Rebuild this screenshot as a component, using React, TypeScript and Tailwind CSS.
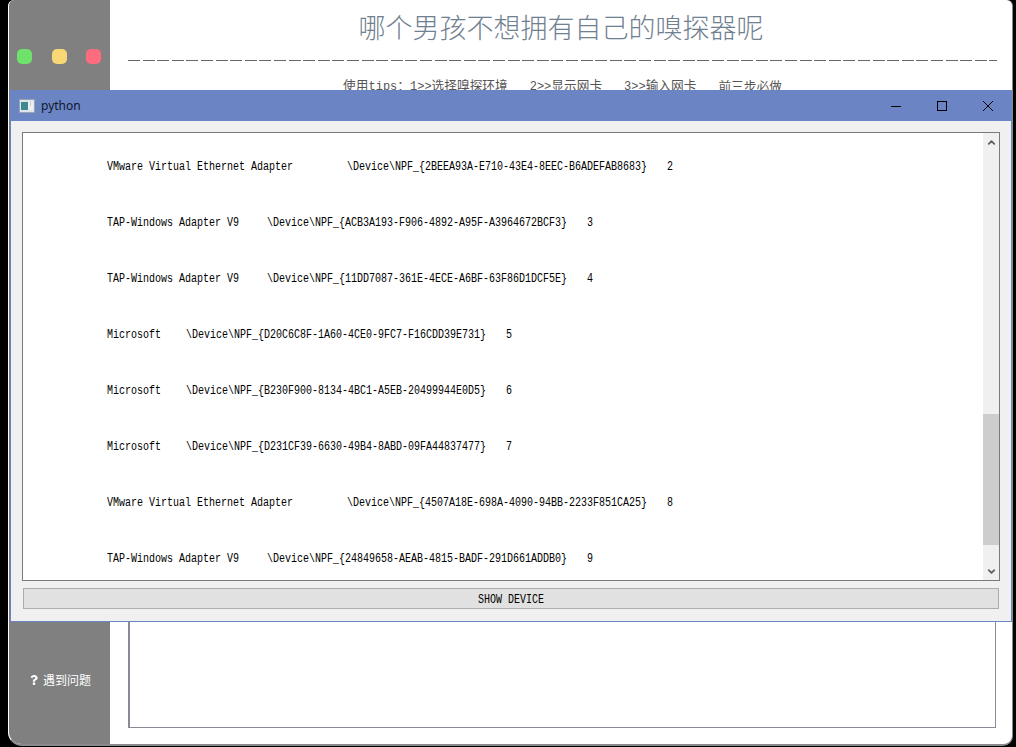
import { ChevronDown, ChevronUp } from "lucide-react"
import { FaQuestion } from "react-icons/fa"

const devices = [
  { name: "VMware Virtual Ethernet Adapter", gap: "ml-[54px]", path: "\\Device\\NPF_{2BEEA93A-E710-43E4-8EEC-B6ADEFAB8683}", num: 2 },
  { name: "TAP-Windows Adapter V9", gap: "ml-[28px]", path: "\\Device\\NPF_{ACB3A193-F906-4892-A95F-A3964672BCF3}", num: 3 },
  { name: "TAP-Windows Adapter V9", gap: "ml-[28px]", path: "\\Device\\NPF_{11DD7087-361E-4ECE-A6BF-63F86D1DCF5E}", num: 4 },
  { name: "Microsoft", gap: "ml-[25px]", path: "\\Device\\NPF_{D20C6C8F-1A60-4CE0-9FC7-F16CDD39E731}", num: 5 },
  { name: "Microsoft", gap: "ml-[25px]", path: "\\Device\\NPF_{B230F900-8134-4BC1-A5EB-20499944E0D5}", num: 6 },
  { name: "Microsoft", gap: "ml-[25px]", path: "\\Device\\NPF_{D231CF39-6630-49B4-8ABD-09FA44837477}", num: 7 },
  { name: "VMware Virtual Ethernet Adapter", gap: "ml-[54px]", path: "\\Device\\NPF_{4507A18E-698A-4090-94BB-2233F851CA25}", num: 8 },
  { name: "TAP-Windows Adapter V9", gap: "ml-[28px]", path: "\\Device\\NPF_{24849658-AEAB-4815-BADF-291D661ADDB0}", num: 9 },
]

function Mono({ children }: { children: string }) {
  return <span className="font-['Liberation_Mono',monospace] text-[12px]">{children}</span>
}

function PythonWindow() {
  return (
    <div className="absolute left-[10px] top-[90px] flex h-[532px] w-[1002px] flex-col border border-t-0 border-[#6b84c4] bg-[#f0f0f0]">
      <div className="flex h-[31px] shrink-0 items-center bg-[#6b84c4] pl-[8px] -mx-px">
        <svg width="16" height="14" viewBox="0 0 16 14" className="ml-px">
          <rect x="0.5" y="0.5" width="15" height="13" fill="#dfe5ea" stroke="#9aa3b4" />
          <rect x="2" y="3" width="7" height="8" fill="#3f8a90" />
          <rect x="9" y="3" width="5" height="8" fill="#eef1f2" />
          <rect x="11" y="3" width="1" height="4" fill="#c4ccd2" />
        </svg>
        <span className="ml-[6px] font-['Noto_Sans','Liberation_Sans',sans-serif] text-[12px] text-[#10182c]">python</span>
        <div className="ml-auto flex items-center">
          <svg width="46" height="12" viewBox="0 0 46 12">
            <path d="M18 6.5h10" stroke="#000" fill="none" />
          </svg>
          <svg width="46" height="12" viewBox="0 0 46 12">
            <rect x="18.5" y="1.5" width="9" height="9" stroke="#000" fill="none" />
          </svg>
          <svg width="46" height="12" viewBox="0 0 46 12" className="mr-[1px]">
            <path d="M18 1l10 10M28 1L18 11" stroke="#000" fill="none" />
          </svg>
        </div>
      </div>
      <div className="flex flex-1 flex-col px-[11px] pb-[12px] pt-[11px]">
        <div className="flex h-[449px] border border-[#7a7a7a] bg-white">
          <div className="flex-1 overflow-hidden pl-[84px] pt-[5px] font-['Liberation_Mono',monospace] text-[10px] text-black">
            {devices.map((d) => (
              <div key={d.path} className="flex h-[56px] items-center">
                <div className="flex scale-y-[1.25] whitespace-pre">
                  <span>{d.name}</span>
                  <span className={d.gap}>{d.path}</span>
                  <span className="ml-[20px]">{d.num}</span>
                </div>
              </div>
            ))}
          </div>
          <div className="flex w-[16px] shrink-0 flex-col bg-[#f0f0f0]">
            <div className="flex h-[17px] items-center justify-center pt-[1px]">
              <ChevronUp size={11} strokeWidth={4} color="#606060" />
            </div>
            <div className="flex-1 pt-[264px]">
              <div className="h-[131px] bg-[#cdcdcd]" />
            </div>
            <div className="flex h-[17px] items-center justify-center">
              <ChevronDown size={11} strokeWidth={4} color="#606060" />
            </div>
          </div>
        </div>
        <div className="ml-px mr-px mt-[7px] flex h-[21px] items-center justify-center border border-[#adadad] bg-[#e1e1e1] pt-[1px] font-['Liberation_Mono',monospace] text-[10px] text-black">
          <span className="scale-y-[1.25]">SHOW DEVICE</span>
        </div>
      </div>
    </div>
  )
}

export default function App() {
  return (
    <div className="relative flex h-[747px] w-[1016px] overflow-hidden bg-black pb-[1px] pl-[8px] pr-[3px] font-['Noto_Sans_CJK_SC',sans-serif]">
      <div className="flex h-full flex-1 overflow-hidden rounded-bl-[14px] rounded-br-[10px] rounded-tl-[6px] rounded-tr-[6px] border-b-2 border-l border-r border-b-[#8a8a8a] border-l-white border-r-[#8a8a8a] bg-white">
        <aside className="flex w-[101px] shrink-0 flex-col bg-[#808080]">
          <div className="mt-[49px] flex pl-[8px]">
            <div className="h-[15px] w-[15px] rounded-[5px] bg-[#6ee26a]" />
            <div className="ml-[20px] h-[15px] w-[15px] rounded-[5px] bg-[#f8d775]" />
            <div className="ml-[19px] h-[15px] w-[15px] rounded-[5px] bg-[#ff6b7f]" />
          </div>
          <div className="mb-[55px] mt-auto flex items-center pl-[20px] text-[12px] text-white">
            <FaQuestion size={10} />
            <span className="ml-[4px]">遇到问题</span>
          </div>
        </aside>
        <main className="flex flex-1 flex-col pl-[18px] pr-[15px]">
          <h1 className="mr-[3px] mt-[8px] h-[38px] text-center text-[27px] font-light leading-[38px] text-[#708090]">
            哪个男孩不想拥有自己的嗅探器呢
          </h1>
          <div className="mt-[14px] h-px bg-[repeating-linear-gradient(90deg,#666_0,#666_12px,transparent_12px,transparent_14.6px)]" />
          <div className="mt-[17px] flex h-[16px] items-center justify-center gap-[22px] whitespace-pre text-[12.7px] leading-[16px] text-[#555]">
            <span>
              使用<Mono>tips</Mono>：<Mono>1&gt;&gt;</Mono>选择嗅探环境
            </span>
            <span>
              <Mono>2&gt;&gt;</Mono>显示网卡
            </span>
            <span>
              <Mono>3&gt;&gt;</Mono>输入网卡
            </span>
            <span>前三步必做</span>
          </div>
          <div className="mb-[16px] mr-px mt-[8px] flex-1 border border-l-2 border-[#8a8a94] bg-white" />
        </main>
      </div>
      <PythonWindow />
    </div>
  )
}
